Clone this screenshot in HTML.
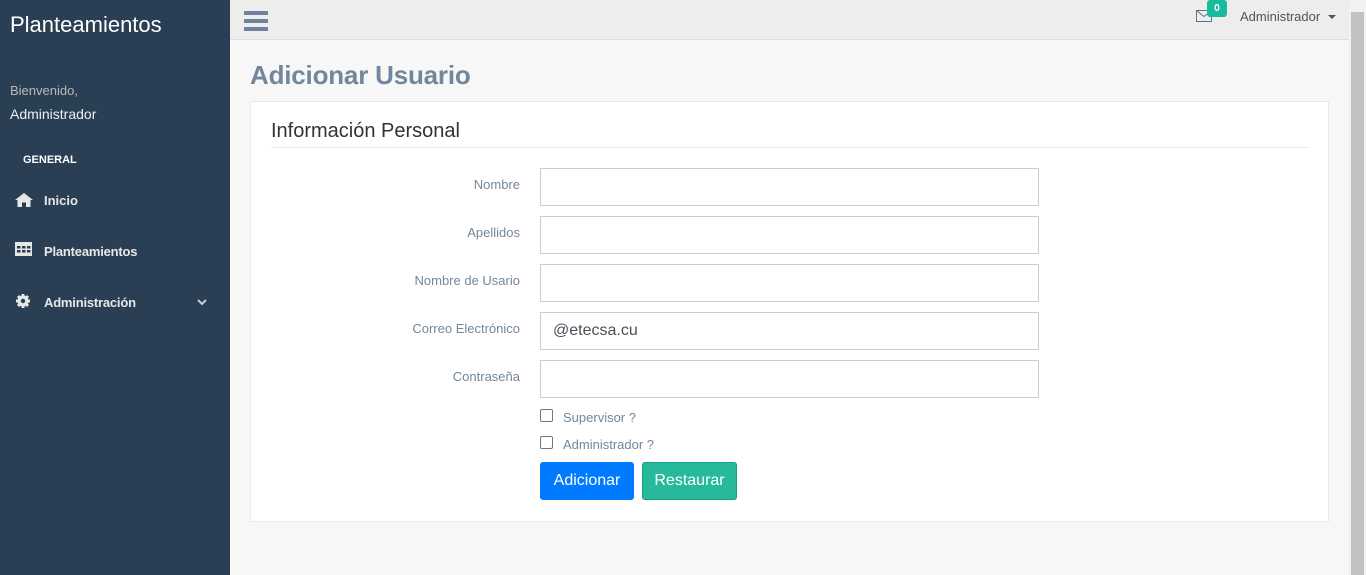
<!DOCTYPE html>
<html><head><meta charset="utf-8"><style>
*{box-sizing:border-box;margin:0;padding:0}
body{width:1366px;height:575px;overflow:hidden;background:#f7f7f7;font-family:"Liberation Sans",sans-serif;position:relative;color:#73879c}
.side{position:absolute;left:0;top:0;width:230px;height:575px;background:#2a3f54;color:#ecf0f1}
.abs{position:absolute;white-space:nowrap}
.top{position:absolute;left:230px;top:0;width:1119px;height:40px;background:#ededed;border-bottom:1px solid #d9dee4}
.sb{position:absolute;left:1349px;top:0;width:17px;height:575px;background:#f1f1f1}
.thumb{position:absolute;left:1351px;top:12px;width:13px;height:563px;background:#c1c1c1}
.panel{position:absolute;left:250px;top:101px;width:1079px;height:421px;background:#fff;border:1px solid #e6e9ed}
.lbl{position:absolute;width:270px;text-align:right;font-size:13px;color:#73879c;left:250px}
.inp{position:absolute;left:540px;width:499px;height:38px;border:1px solid #ccc;background:#fff;font-size:16px;color:#495057;padding:9px 12px}
.cb{position:absolute;left:540px;width:13px;height:13px;border:1px solid #767676;border-radius:2px;background:#fff}
.btn{position:absolute;top:462px;height:38px;color:#fff;font-size:16px;text-align:center;line-height:36px;border-radius:3px}
</style></head><body>
<div class="side">
<div class="abs" style="left:10px;top:12px;font-size:22px;color:#fff">Planteamientos</div>
<div class="abs" style="left:10px;top:83px;font-size:13px;color:#bab8b8">Bienvenido,</div>
<div class="abs" style="left:10px;top:106px;font-size:14px;color:#ecf0f1">Administrador</div>
<div class="abs" style="left:23px;top:154px;font-size:11px;font-weight:bold;color:#fff">GENERAL</div>
<svg class="abs" style="left:15px;top:193px" width="18" height="14" viewBox="0 0 18 14"><path d="M9 0L0 7h2.5v7h4.5v-4.5h4v4.5h4.5V7H18z" fill="#e7e7e7"/></svg>
<div class="abs" style="left:44px;top:193px;font-size:13px;font-weight:bold;color:#e7e7e7">Inicio</div>
<svg class="abs" style="left:15px;top:242px" width="17" height="14" viewBox="0 0 17 14"><rect width="17" height="14" fill="#e7e7e7"/><g fill="#2a3f54"><rect x="2" y="4" width="3.5" height="2.5"/><rect x="7" y="4" width="3.5" height="2.5"/><rect x="12" y="4" width="3.5" height="2.5"/><rect x="2" y="8" width="3.5" height="2.5"/><rect x="7" y="8" width="3.5" height="2.5"/><rect x="12" y="8" width="3.5" height="2.5"/></g></svg>
<div class="abs" style="left:44px;top:244px;font-size:13px;font-weight:bold;color:#e7e7e7;letter-spacing:-0.2px">Planteamientos</div>
<svg class="abs" style="left:15px;top:293px" width="16" height="16" viewBox="0 0 16 16"><circle cx="8" cy="8" r="5.5" fill="#e7e7e7"/><g stroke="#e7e7e7" stroke-width="3"><path d="M8 1v14M1 8h14M3 3l10 10M13 3L3 13"/></g><circle cx="8" cy="8" r="2.2" fill="#2a3f54"/></svg>
<div class="abs" style="left:44px;top:295px;font-size:13px;font-weight:bold;color:#e7e7e7;letter-spacing:-0.2px">Administración</div>
<svg class="abs" style="left:197px;top:299px" width="10" height="7" viewBox="0 0 10 7"><path d="M1 1l4 4 4-4" stroke="#c4cfda" stroke-width="2" fill="none"/></svg>
</div>
<div class="top">
<svg class="abs" style="left:14px;top:11px" width="24" height="20"><rect y="0" width="24" height="4" fill="#6b8199"/><rect y="8" width="24" height="4" fill="#6b8199"/><rect y="16" width="24" height="4" fill="#6b8199"/></svg>
<svg class="abs" style="left:966px;top:10px" width="16" height="12" viewBox="0 0 16 12"><rect x="0.5" y="0.5" width="15" height="11" fill="none" stroke="#5a738e"/><path d="M.5 .5l7.5 6 7.5-6" fill="none" stroke="#5a738e"/></svg>
<div class="abs" style="left:977px;top:0;width:20px;height:17px;background:#1abb9c;border-radius:3px;color:#fff;font-size:10px;font-weight:bold;text-align:center;line-height:17px">0</div>
<div class="abs" style="left:1010px;top:9px;font-size:13px;color:#515356">Administrador</div>
<div class="abs" style="left:1098px;top:15px;border-left:4px solid transparent;border-right:4px solid transparent;border-top:4px solid #515356"></div>
</div>
<div class="sb"></div><div class="thumb"></div>
<div class="abs" style="left:250px;top:60px;font-size:26px;font-weight:bold;color:#73879c;letter-spacing:-0.2px">Adicionar Usuario</div>
<div class="panel">
<div class="abs" style="left:20px;top:18px;font-size:20px;color:#333">Información Personal</div>
<div class="abs" style="left:20px;top:45px;width:1038px;height:1px;background:#e6e9ed"></div>
</div>
<div class="lbl" style="top:177px">Nombre</div><div class="inp" style="top:168px"></div>
<div class="lbl" style="top:225px">Apellidos</div><div class="inp" style="top:216px"></div>
<div class="lbl" style="top:273px">Nombre de Usario</div><div class="inp" style="top:264px"></div>
<div class="lbl" style="top:321px">Correo Electrónico</div><div class="inp" style="top:312px">@etecsa.cu</div>
<div class="lbl" style="top:369px">Contraseña</div><div class="inp" style="top:360px"></div>
<div class="cb" style="top:409px"></div><div class="abs" style="left:563px;top:410px;font-size:13px">Supervisor ?</div>
<div class="cb" style="top:436px"></div><div class="abs" style="left:563px;top:437px;font-size:13px">Administrador ?</div>
<div class="btn" style="left:540px;width:94px;background:#007bff;border:1px solid #007bff">Adicionar</div>
<div class="btn" style="left:642px;width:95px;background:#26b99a;border:1px solid #169f85">Restaurar</div>
</body></html>
